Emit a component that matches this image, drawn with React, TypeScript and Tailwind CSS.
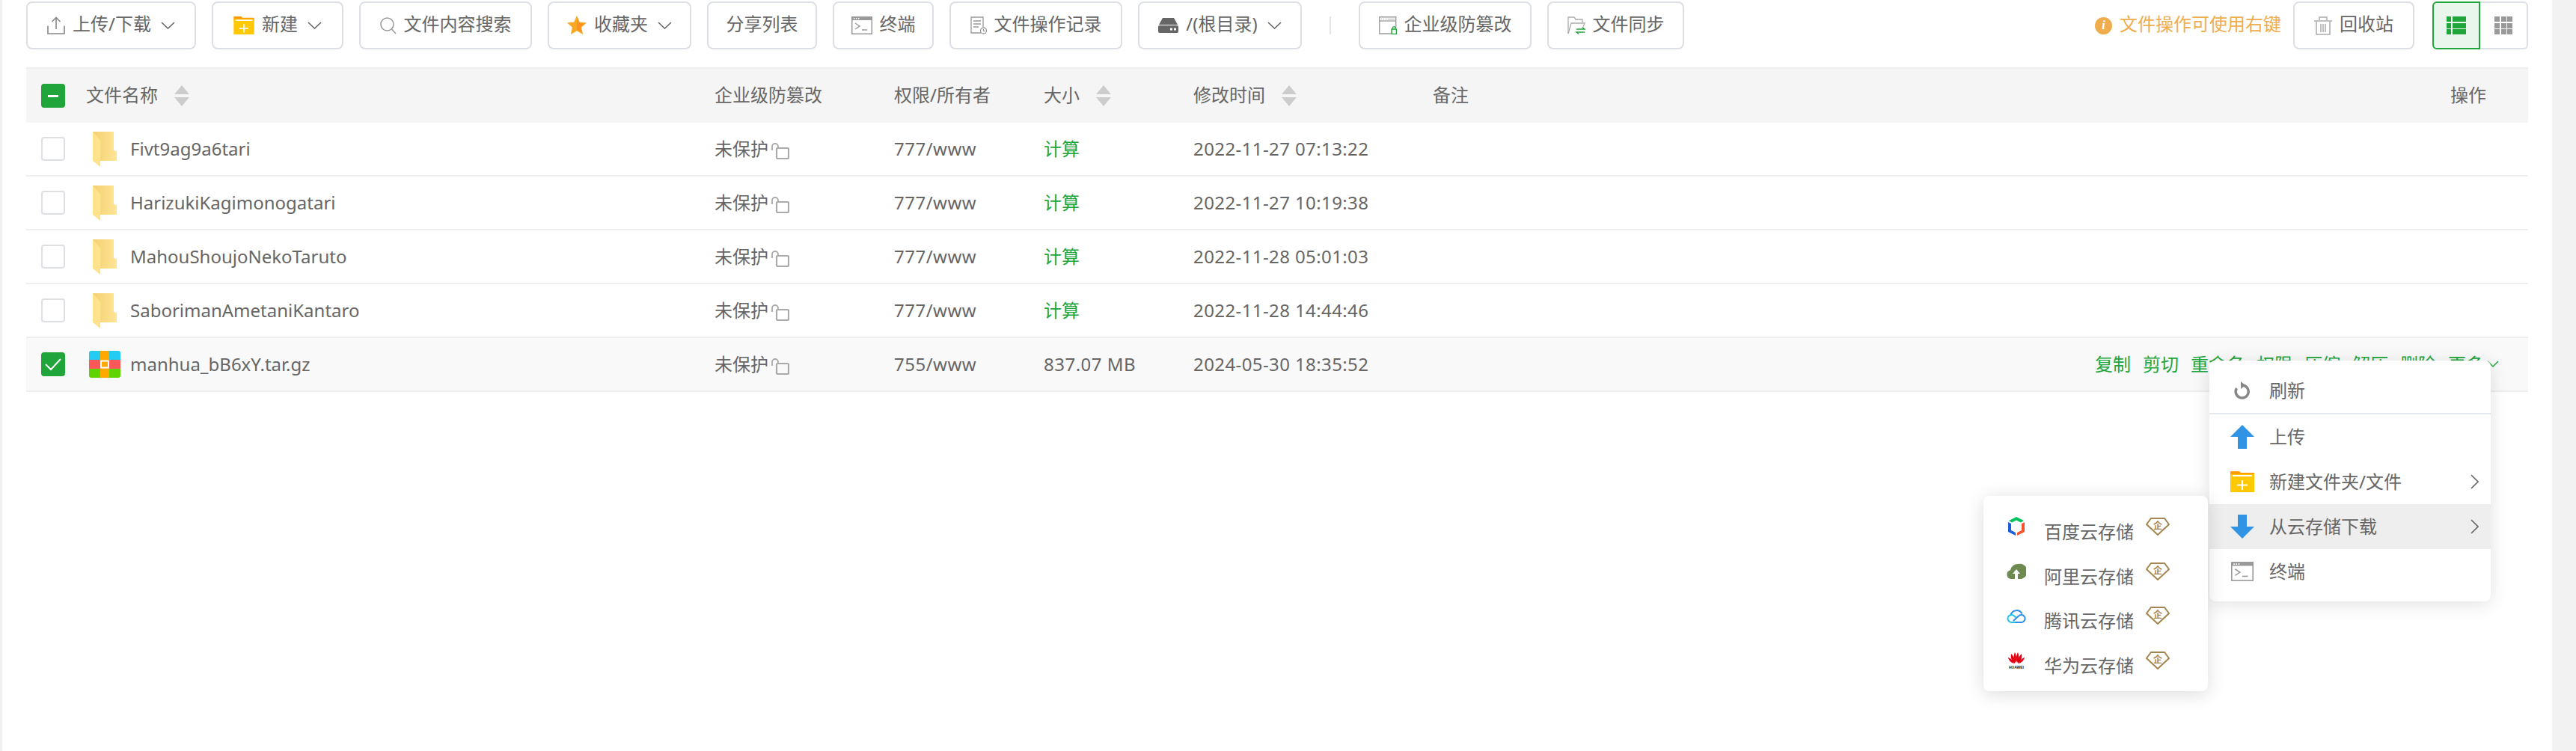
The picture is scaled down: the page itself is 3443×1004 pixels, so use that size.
import type { ReactNode } from 'react';

const Chevron = () => (
  <svg width="19" height="10" viewBox="0 0 19 10" className="ml-[3px] shrink-0" fill="none" stroke="#666" strokeWidth="1.6">
    <path d="M1 1l8.5 8L18 1" />
  </svg>
);

const FolderAdd = ({ w = 28, h = 24 }: { w?: number; h?: number }) => (
  <svg width={w} height={h} viewBox="0 0 32 28" className="shrink-0">
    <path d="M0 1a1 1 0 0 1 1-1h11l2 2h17a1 1 0 0 1 1 1v3H0z" fill="#ff9d00" />
    <path d="M0 4h32v24H0z" fill="#ffc800" />
    <path d="M3 5h26v2H3z" fill="#fff" />
    <path d="M15 12h2v5.5h6v2h-6V25h-2v-5.5H9v-2h6z" fill="#fff" />
  </svg>
);

const Terminal = ({ w = 28, h = 24 }: { w?: number; h?: number }) => (
  <svg width={w} height={h} viewBox="0 0 28 24" className="shrink-0">
    <rect x="0.75" y="0.75" width="26.5" height="22.5" fill="#fff" stroke="#999" strokeWidth="1.5" />
    <path d="M0 0h28v5H0z" fill="#999" />
    <path d="M3 2h1.5v1.5H3zM6 2h1.5v1.5H6zM9 2h1.5v1.5H9z" fill="#fff" />
    <path d="M5 9l6 4-6 4" fill="none" stroke="#999" strokeWidth="1.5" />
    <path d="M14 18h7" stroke="#999" strokeWidth="1.5" />
  </svg>
);

const icons: Record<string, ReactNode> = {
  upload: (
    <svg width="24" height="24" viewBox="0 0 24 24" fill="none" stroke="#888" strokeWidth="1.6" className="shrink-0">
      <path d="M12 17V1.5M6.5 7L12 1.5 17.5 7M1 12.5V23h22V12.5" />
    </svg>
  ),
  search: (
    <svg width="22" height="23" viewBox="0 0 22 23" fill="none" stroke="#999" strokeWidth="1.5" className="shrink-0">
      <circle cx="9.5" cy="9.5" r="8.5" />
      <path d="M15.5 16l5.5 6" />
    </svg>
  ),
  star: (
    <svg width="26" height="26" viewBox="0 0 26 26" className="shrink-0">
      <path d="M13 0l3.8 8.4 9.2 1-6.8 6.2 1.9 9.4L13 20.2 4.900 25l1.900-9.400L0 9.400l9.200-1z" fill="#f9a825" />
      <path d="M13 4l2.700 6.200 6.600.7-4.900 4.500 1.300 6.600L13 18.500z" fill="#ff8f1f" />
    </svg>
  ),
  log: (
    <svg width="22" height="24" viewBox="0 0 22 24" fill="none" stroke="#999" strokeWidth="1.3" className="shrink-0">
      <path d="M14 22H1V1h16v13" />
      <path d="M4 6h10M4 10h10M4 14h7" />
      <circle cx="17.500" cy="19" r="4" />
      <path d="M17.500 17v2.300h1.800" />
    </svg>
  ),
  disk: (
    <svg width="27" height="20" viewBox="0 0 27 20" className="shrink-0">
      <path d="M6 0h15l5 9H1z" fill="#666" />
      <rect y="10" width="27" height="10" rx="2" fill="#666" />
      <rect x="16" y="13.500" width="3" height="3" fill="#fff" />
      <rect x="21" y="13.500" width="3" height="3" fill="#fff" />
    </svg>
  ),
  tamper: (
    <svg width="24" height="24" viewBox="0 0 24 24" fill="none" className="shrink-0">
      <path d="M16 23H.75V.75h22V15" stroke="#999" strokeWidth="1.300" />
      <path d="M1 6h22" stroke="#999" strokeWidth="1.300" />
      <path d="M3 3.500h1M6 3.500h1M9 3.500h1M12 3.500h9" stroke="#aaa" />
      <rect x="17" y="17" width="6.500" height="6.500" stroke="#20a53a" strokeWidth="1.500" />
      <path d="M18.500 17v-2a1.800 1.800 0 0 1 3.500 0v2" stroke="#20a53a" strokeWidth="1.300" />
    </svg>
  ),
  sync: (
    <svg width="24" height="24" viewBox="0 0 24 24" fill="none" className="shrink-0">
      <path d="M1 23V1h8l2 3h9v4" stroke="#aaa" strokeWidth="1.300" />
      <path d="M1 23l4-14h18l-2 5" stroke="#aaa" strokeWidth="1.300" />
      <path d="M12 17h11l-3-2.500M23 21H12l3 2.500" stroke="#20a53a" strokeWidth="1.400" />
    </svg>
  ),
  trash: (
    <svg width="24" height="25" viewBox="0 0 24 25" fill="none" stroke="#aaa" strokeWidth="1.500" className="shrink-0">
      <path d="M0 6h24M7 5V1h10v4M3 7v17h18V7M9 10v11M15 10v11M12 10v11" />
    </svg>
  ),
};

const ToolButton = ({ icon, label, arrow, className = '' }: { icon?: ReactNode; label: string; arrow?: boolean; className?: string }) => (
  <button
    className={`flex items-center justify-center gap-[10px] h-[64px] rounded-lg border-2 border-[#dcdfe6] bg-white text-[#666] whitespace-nowrap ${className}`}
  >
    {icon}
    <span className="pb-[4px]">{label}</span>
    {arrow && <Chevron />}
  </button>
);

const SortCaret = () => (
  <svg width="20" height="28" viewBox="0 0 20 28" className="ml-[22px] shrink-0">
    <path d="M10 0l10 12H0zM10 28L0 16h20z" fill="#ccc" />
  </svg>
);

const Checkbox = ({ state }: { state?: 'some' | 'on' }) => (
  <div
    className={`flex items-center justify-center w-[32px] h-[32px] shrink-0 rounded-[4px] border-2 ${
      state ? 'bg-[#20a53a] border-[#20a53a]' : 'bg-white border-[#dcdfe6]'
    }`}
  >
    {state === 'some' && <div className="w-[14px] h-[3px] bg-white" />}
    {state === 'on' && (
      <svg width="22" height="18" viewBox="0 0 22 18" fill="none" stroke="#fff" strokeWidth="2">
        <path d="M1 9l7 7L21 2" />
      </svg>
    )}
  </div>
);

const FolderIcon = () => (
  <svg width="32" height="47" viewBox="0 0 32 47" className="ml-[37px] shrink-0">
    <defs>
      <linearGradient id="folderBack" x1="0" x2="1" y1="0" y2="0">
        <stop offset="0" stopColor="#f3d071" />
        <stop offset="1" stopColor="#ffe595" />
      </linearGradient>
    </defs>
    <path d="M0 0h28v25l4 1v13H0z" fill="url(#folderBack)" />
    <path d="M0 0l10 11v36L0 39z" fill="#ffe28c" />
  </svg>
);

const RarIcon = () => (
  <svg width="42" height="36" viewBox="0 0 42 36" className="ml-[32px] mr-[-5px] shrink-0">
    <clipPath id="rarClip">
      <rect width="42" height="36" rx="3" />
    </clipPath>
    <g clipPath="url(#rarClip)">
      <rect width="42" height="12" fill="#22ccf2" />
      <rect y="12" width="42" height="12" fill="#ff5858" />
      <rect y="24" width="42" height="12" fill="#5fd400" />
      <rect x="15" width="12" height="36" fill="#ffa800" />
      <rect x="16" y="13.500" width="10" height="9" fill="#ffa800" stroke="#fff" strokeWidth="2" />
    </g>
  </svg>
);

const LockIcon = () => (
  <svg width="24" height="22" viewBox="0 0 24 22" fill="none" stroke="#aaa" className="ml-[4px] mt-[6px] shrink-0">
    <rect x="7" y="7" width="16" height="14" rx="1.500" strokeWidth="2.200" />
    <path d="M1 10V5a4 4 0 0 1 8 0v1" strokeWidth="1.800" />
  </svg>
);

const rows = [
  { name: 'Fivt9ag9a6tari', perm: '777/www', time: '2022-11-27 07:13:22' },
  { name: 'HarizukiKagimonogatari', perm: '777/www', time: '2022-11-27 10:19:38' },
  { name: 'MahouShoujoNekoTaruto', perm: '777/www', time: '2022-11-28 05:01:03' },
  { name: 'SaborimanAmetaniKantaro', perm: '777/www', time: '2022-11-28 14:44:46' },
  { name: 'manhua_bB6xY.tar.gz', perm: '755/www', time: '2024-05-30 18:35:52', size: '837.07 MB', file: true },
];

const rowGrid = 'grid grid-cols-[900px_260px_200px_200px_320px_1fr] items-center';

const MenuItem = ({ icon, label, arrow, active }: { icon: ReactNode; label: string; arrow?: boolean; active?: boolean }) => (
  <div className={`flex items-center h-[60px] pl-[28px] pr-[16px] ${active ? 'bg-[#eeeeee]' : ''}`}>
    <span className="flex justify-center w-[32px] shrink-0">{icon}</span>
    <span className="ml-[20px] flex-1">{label}</span>
    {arrow && (
      <svg width="11" height="20" viewBox="0 0 11 20" fill="none" stroke="#666" strokeWidth="1.600">
        <path d="M1 1l9 9-9 9" />
      </svg>
    )}
  </div>
);

const Diamond = () => (
  <svg width="32" height="24" viewBox="0 0 32 24" className="ml-[16px] shrink-0">
    <path d="M7 1h18l6 8-15 14L1 9z" fill="#fff" stroke="#a5854f" strokeWidth="2" />
    <text x="16" y="15" textAnchor="middle" fontSize="12" fontWeight="700" fill="#a5854f" fontFamily="'Noto Sans CJK SC'">企</text>
  </svg>
);

const clouds = [
  {
    label: '百度云存储',
    icon: (
      <svg width="26" height="26" viewBox="0 0 26 26">
        <path d="M13 0l10 5-4 2.500-6-3-6 3-4-2.500z" fill="#00c261" />
        <path d="M2 7l4 2v9l6 3v4l-10-5z" fill="#1a5fe0" />
        <path d="M24 7l-4 2v9l-6 3v4l10-5z" fill="#f4552f" />
      </svg>
    ),
  },
  {
    label: '阿里云存储',
    icon: (
      <svg width="26" height="22" viewBox="0 0 26 22">
        <path d="M6 21a6 6 0 0 1-1-11.800A10 10 0 0 1 15 1a10 10 0 0 1 5 20z" fill="#6f8a50" />
        <path d="M13 8l5 6h-3v7h-4v-7H8z" fill="#fff" />
      </svg>
    ),
  },
  {
    label: '腾讯云存储',
    icon: (
      <svg width="26" height="20" viewBox="0 0 26 20" fill="none" strokeWidth="2">
        <path d="M5.500 9.500a8 8 0 0 1 15-2" stroke="#2f8cf0" />
        <path d="M11 19h9a5 5 0 1 0-4-8.500L9 17" stroke="#2f8cf0" />
        <path d="M11 19H6.500a5 5 0 1 1 3-9l3 2.500" stroke="#1fc4e8" />
      </svg>
    ),
  },
  {
    label: '华为云存储',
    icon: (
      <svg width="26" height="24" viewBox="0 0 26 24">
        <g fill="#e60012">
          <path d="M12 15C9 11 9 6 11 1c2 4 3 9 1 14zM14 15c3-4 3-9 1-14-2 4-3 9-1 14z" />
          <path d="M11 16C7 13 5 9 6 3c3 3 6 8 5 13zM15 16c4-3 6-7 5-13-3 3-6 8-5 13z" />
          <path d="M10 16C6 15 3 12 2 8c3 1 7 4 8 8zM16 16c4-1 7-4 8-8-3 1-7 4-8 8z" />
        </g>
        <text x="13" y="23" textAnchor="middle" fontSize="5" fontWeight="700" fill="#222" fontFamily="'Liberation Sans'">HUAWEI</text>
      </svg>
    ),
  },
];

export default function App() {
  return (
    <div className="relative flex h-[1004px] w-full overflow-hidden bg-white text-[24px] leading-[32px] text-[#666] font-['Noto_Sans','Noto_Sans_CJK_SC',sans-serif]">
      <div className="w-[3px] shrink-0 bg-[#f0f0f0]" />
      <div className="flex-1 pl-[32px] pr-[32px] pt-[2px]">
        {/* toolbar */}
        <div className="flex items-center gap-[21px]">
          <ToolButton icon={icons.upload} label="上传/下载" arrow className="w-[227px]" />
          <ToolButton icon={<FolderAdd />} label="新建" arrow className="w-[176px]" />
          <ToolButton icon={icons.search} label="文件内容搜索" className="w-[231px]" />
          <ToolButton icon={icons.star} label="收藏夹" arrow className="w-[192px]" />
          <ToolButton label="分享列表" className="w-[147px]" />
          <ToolButton icon={<Terminal />} label="终端" className="w-[135px]" />
          <ToolButton icon={icons.log} label="文件操作记录" className="w-[231px]" />
          <ToolButton icon={icons.disk} label="/(根目录)" arrow className="w-[219px]" />
          <div className="w-[2px] h-[24px] mx-[16px] bg-[#e4e4e4]" />
          <ToolButton icon={icons.tamper} label="企业级防篡改" className="w-[231px]" />
          <ToolButton icon={icons.sync} label="文件同步" className="w-[183px]" />
          <div className="flex-1" />
          <div className="flex items-center gap-[10px] text-[#f0ad4e]">
            <span className="flex items-center justify-center w-[23px] h-[23px] rounded-full bg-[#f0ad4e] text-white text-[16px] italic font-bold font-['Liberation_Serif',serif]">i</span>
            <span className="pb-[4px]">文件操作可使用右键</span>
          </div>
          <div className="flex ml-[-5px] mr-[3px]">
            <ToolButton icon={icons.trash} label="回收站" className="w-[162px]" />
          </div>
          <div className="flex">
            <div className="flex items-center justify-center w-[64px] h-[64px] rounded-l-[6px] border-2 border-[#20a53a] bg-[#e8f6ec]">
              <div className="grid grid-cols-[6px_18px] grid-rows-[7px_7px_7px] gap-[1.500px]">
                {[0, 1, 2, 3, 4, 5].map((i) => (
                  <div key={i} className="bg-[#20a53a]" />
                ))}
              </div>
            </div>
            <div className="flex items-center justify-center w-[64px] h-[64px] rounded-r-[6px] border-2 border-l-0 border-[#dcdfe6]">
              <div className="grid grid-cols-[7px_7px_7px] grid-rows-[7px_7px_7px] gap-[1.500px]">
                {[0, 1, 2, 3, 4, 5, 6, 7, 8].map((i) => (
                  <div key={i} className="bg-[#999]" />
                ))}
              </div>
            </div>
          </div>
        </div>

        {/* table */}
        <div className="mt-[24px] border-t-2 border-[#eeeeee]">
          <div className={`${rowGrid} h-[72px] bg-[#f5f5f5]`}>
            <div className="flex items-center pl-[20px]">
              <Checkbox state="some" />
              <span className="ml-[28px] pb-[2px]">文件名称</span>
              <SortCaret />
            </div>
            <div className="pl-[20px] pb-[2px]">企业级防篡改</div>
            <div className="pb-[2px]">权限/所有者</div>
            <div className="flex items-center">
              <span className="pb-[2px]">大小</span>
              <SortCaret />
            </div>
            <div className="flex items-center">
              <span className="pb-[2px]">修改时间</span>
              <SortCaret />
            </div>
            <div className="flex items-center justify-between pr-[56px]">
              <span className="pb-[2px]">备注</span>
              <span className="pb-[2px]">操作</span>
            </div>
          </div>
          {rows.map((row) => (
            <div key={row.name} className={`${rowGrid} h-[72px] border-b-2 border-[#eeeeee] ${row.file ? 'bg-[#f9f9f9]' : ''}`}>
              <div className="flex items-center pl-[20px]">
                <Checkbox state={row.file ? 'on' : undefined} />
                {row.file ? <RarIcon /> : <FolderIcon />}
                <span className="ml-[18px]">{row.name}</span>
              </div>
              <div className="flex items-center pl-[20px]">
                <span>未保护</span>
                <LockIcon />
              </div>
              <div className="tracking-[0.5px]">{row.perm}</div>
              <div className={row.size ? 'tracking-[0.5px]' : 'text-[#20a53a]'}>{row.size ?? '计算'}</div>
              <div className="tracking-[0.4px]">{row.time}</div>
              <div className="flex justify-end items-center gap-[16px] pr-[39px] text-[#20a53a]">
                {row.file && (
                  <>
                    <span>复制</span>
                    <span>剪切</span>
                    <span>重命名</span>
                    <span>权限</span>
                    <span>压缩</span>
                    <span>解压</span>
                    <span>删除</span>
                    <span className="flex items-center gap-[4px]">
                      更多
                      <svg width="16" height="10" viewBox="0 0 16 10" fill="none" stroke="#20a53a" strokeWidth="1.500">
                        <path d="M1 1l7 7 7-7" />
                      </svg>
                    </span>
                  </>
                )}
              </div>
            </div>
          ))}
        </div>
      </div>
      <div className="w-[32px] shrink-0 bg-[#f2f2f2]" />

      {/* right-click menu */}
      <div className="absolute left-[2953px] top-[482px] w-[376px] py-[10px] rounded-lg bg-white shadow-[0_4px_24px_rgba(0,0,0,0.12)]">
        <MenuItem
          label="刷新"
          icon={
            <svg width="22" height="24" viewBox="0 0 22 24" fill="none" stroke="#888" strokeWidth="3.500">
              <path d="M11 5a8.500 8.500 0 1 1-7.500 4" />
              <path d="M9 0l6 5-6 5z" fill="#888" stroke="none" />
            </svg>
          }
        />
        <div className="h-[2px] bg-[#e4e7ed]" />
        <MenuItem
          label="上传"
          icon={
            <svg width="32" height="32" viewBox="0 0 32 32">
              <path d="M16 0l16 16h-10v16H10V16H0z" fill="#3093e4" />
            </svg>
          }
        />
        <MenuItem label="新建文件夹/文件" arrow icon={<FolderAdd w={32} h={28} />} />
        <MenuItem
          label="从云存储下载"
          arrow
          active
          icon={
            <svg width="32" height="32" viewBox="0 0 32 32">
              <path d="M16 32L0 16h10V0h12v16h10z" fill="#3093e4" />
            </svg>
          }
        />
        <MenuItem label="终端" icon={<Terminal w={30} h={30} />} />
      </div>

      {/* cloud storage submenu */}
      <div className="absolute left-[2651px] top-[663px] w-[300px] pt-[11px] pb-[11px] rounded-lg bg-white shadow-[0_4px_24px_rgba(0,0,0,0.14)]">
        {clouds.map((cloud) => (
          <div key={cloud.label} className="flex items-center h-[59.75px] pl-[30px]">
            <span className="flex justify-center w-[28px] shrink-0">{cloud.icon}</span>
            <span className="ml-[23px] mt-[14px]">{cloud.label}</span>
            <Diamond />
          </div>
        ))}
      </div>
    </div>
  );
}
